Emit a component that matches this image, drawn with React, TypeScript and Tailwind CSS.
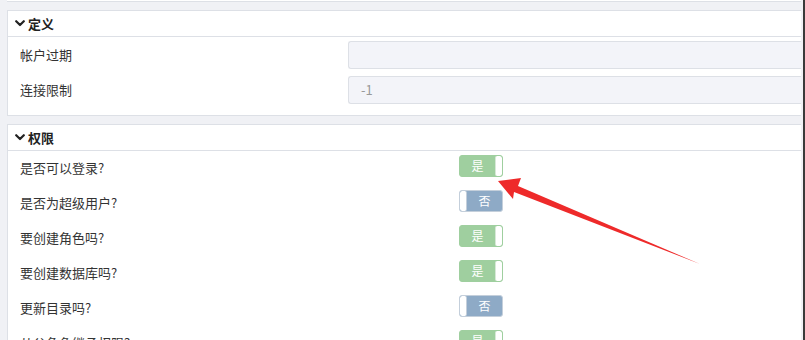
import React from 'react'

const FONT = { fontFamily: '"Noto Sans CJK SC", "Noto Sans", sans-serif' }

function Chevron() {
  return (
    <svg width="10" height="7" viewBox="0 0 10 7" className="shrink-0">
      <path d="M1.2 1.2 L5 5 L8.8 1.2" fill="none" stroke="#222" strokeWidth="2.2" strokeLinecap="round" strokeLinejoin="round" />
    </svg>
  )
}

function CardHeader({ title }: { title: string }) {
  return (
    <div className="h-[26px] flex items-center gap-[3px] pl-[7px] border-b border-[#dde0e6] bg-white">
      <Chevron />
      <span className="text-[13px] font-bold text-[#222] leading-none">{title}</span>
    </div>
  )
}

function Toggle({ on }: { on: boolean }) {
  if (on) {
    return (
      <div className="w-[44px] h-[22px] flex rounded-[3px] overflow-hidden bg-[#9fcf9f] border border-[#9fcf9f]">
        <div className="flex-1 flex items-center justify-center text-white text-[12px] leading-none">是</div>
        <div className="w-[7px] bg-white rounded-[2px] border-l border-[#d8e8d8]" />
      </div>
    )
  }
  return (
    <div className="w-[44px] h-[22px] flex rounded-[3px] overflow-hidden bg-[#8eaac6] border border-[#c4cfdb]">
      <div className="w-[7px] bg-white rounded-[2px] border-r border-[#c4cfdb]" />
      <div className="flex-1 flex items-center justify-center text-white text-[12px] leading-none">否</div>
    </div>
  )
}

const PRIVS: [string, boolean][] = [
  ['是否可以登录?', true],
  ['是否为超级用户?', false],
  ['要创建角色吗?', true],
  ['要创建数据库吗?', true],
  ['更新目录吗?', false],
  ['从父角色继承权限?', true],
]

export default function App() {
  return (
    <div
      className="relative w-[805px] h-[340px] overflow-hidden bg-[#f0f1f5] border-r-2 border-[#3a3a3a] pl-[7px] pr-[2px]"
      style={FONT}
    >
      <div className="h-[2px] bg-white border-b border-[#dde0e6]" />

      <div className="mt-[8px] bg-white border border-[#dde0e6] border-r-0">
        <CardHeader title="定义" />
        <div className="pt-[4px] pb-[11px] flex flex-col gap-[7px]">
          <div className="flex items-center h-[28px]">
            <div className="w-[340px] pl-[12px] text-[13px] text-[#333]">帐户过期</div>
            <div className="flex-1 h-[28px] bg-[#f3f4f9] border border-[#dde0e6] border-r-0 rounded-l-[3px]" />
          </div>
          <div className="flex items-center h-[28px]">
            <div className="w-[340px] pl-[12px] text-[13px] text-[#333]">连接限制</div>
            <div className="flex-1 h-[28px] bg-[#f3f4f9] border border-[#dde0e6] border-r-0 rounded-l-[3px] flex items-center pl-[12px] text-[13px] text-[#999]">
              -1
            </div>
          </div>
        </div>
      </div>

      <div className="mt-[8px] bg-white border border-[#dde0e6] border-r-0 h-[400px]">
        <CardHeader title="权限" />
        <div className="pt-[4px] flex flex-col gap-[13px]">
          {PRIVS.map(([label, on]) => (
            <div key={label} className="flex items-center h-[22px]">
              <div className="w-[451px] pl-[12px] text-[13px] text-[#333] pt-[3px]">{label}</div>
              <Toggle on={on} />
            </div>
          ))}
        </div>
      </div>

      <svg className="absolute left-0 top-0 pointer-events-none" width="805" height="340" viewBox="0 0 805 340">
        <polygon
          points="498,181 521,178 518,186 700,264 514,192 513,199"
          fill="#ee2a2a"
        />
      </svg>
    </div>
  )
}
